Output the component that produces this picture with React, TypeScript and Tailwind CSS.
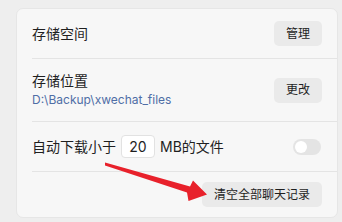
import React from "react";

const font = { fontFamily: '"Segoe UI", Inter, "Noto Sans CJK SC", sans-serif' };

function Btn({ children }: { children: React.ReactNode }) {
  return (
    <button className="h-[25px] shrink-0 rounded-[5px] bg-[#eaeaea] px-3 text-[12px] leading-none text-[#1f1f1f]">
      {children}
    </button>
  );
}

export default function App() {
  return (
    <div
      className="relative h-[222px] w-[342px] overflow-hidden bg-[#eeeeee] pl-4 pt-2 pr-1"
      style={font}
    >
      <div className="flex h-[210px] flex-col rounded-[7px] border border-[#e6e6e6] bg-[#f7f7f7] pl-[15px]">
        <div className="flex h-[50px] items-center justify-between border-b border-[#e4e4e4] pr-[15px]">
          <span className="text-[14px] text-[#1f1f1f]">存储空间</span>
          <Btn>管理</Btn>
        </div>

        <div className="flex h-[63px] items-center justify-between border-b border-[#e4e4e4] pr-[15px]">
          <div className="flex flex-col">
            <span className="text-[14px] leading-[20px] text-[#1f1f1f]">存储位置</span>
            <span className="text-[12px] leading-[18px] text-[#4f6ea6]">D:\Backup\xwechat_files</span>
          </div>
          <Btn>更改</Btn>
        </div>

        <div className="flex h-[50px] items-center justify-between border-b border-[#e4e4e4] pr-[15px]">
          <div className="flex items-center text-[14px] text-[#1f1f1f]">
            <span>自动下载小于</span>
            <span className="mx-[5px] flex h-[23px] w-[34px] items-center justify-center rounded-[4px] border border-[#e2e2e2] bg-white text-[14px]">
              20
            </span>
            <span>MB的文件</span>
          </div>
          <div className="mr-px flex h-[16px] w-[28px] items-center rounded-full bg-[#e4e4e4] px-[2px]">
            <div className="h-[12px] w-[12px] rounded-full bg-white" />
          </div>
        </div>

        <div className="flex flex-1 items-center justify-end pr-[15px]">
          <Btn>清空全部聊天记录</Btn>
        </div>
      </div>

      <svg className="pointer-events-none absolute left-0 top-0" width="342" height="222" viewBox="0 0 342 222">
        <polygon points="105,162.5 190,186.5 193,180.5 207,194.5 188.5,201 187,192.5 105,165.5" fill="#e8212b" />
      </svg>
    </div>
  );
}
